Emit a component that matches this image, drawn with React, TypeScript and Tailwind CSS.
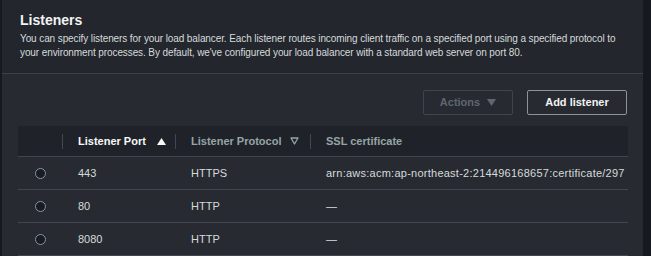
import React from 'react';

const rows = [
  { port: '443', protocol: 'HTTPS', cert: 'arn:aws:acm:ap-northeast-2:214496168657:certificate/297' },
  { port: '80', protocol: 'HTTP', cert: '—' },
  { port: '8080', protocol: 'HTTP', cert: '—' },
];

const Sep = () => <span className="w-px h-[15px] bg-[#414750] shrink-0" />;

const App = () => {
  return (
    <div className="w-[651px] h-[256px] bg-[#16191f] flex overflow-hidden font-['Liberation_Sans',Arial,sans-serif]">
      <div className="ml-[2px] w-[641px] flex flex-col bg-[#272a31]">
        {/* header */}
        <div className="h-[74px] bg-[#23262d] border-b border-[#3d424a] px-[18px] pt-[11px]">
          <h2 className="text-[14px] leading-[18px] font-bold text-[#f2f3f3]">Listeners</h2>
          <p className="mt-[3px] text-[10px] leading-[14px] tracking-[-0.1px] text-[#d5dbdb] whitespace-nowrap">
            You can specify listeners for your load balancer. Each listener routes incoming client traffic on a specified port using a specified protocol to
            <br />
            your environment processes. By default, we've configured your load balancer with a standard web server on port 80.
          </p>
        </div>

        {/* body */}
        <div className="pl-[16px] pr-[15px] pt-[16px]">
          <div className="flex justify-end gap-[14px] pr-[1px]">
            <button className="w-[90px] h-[25px] border border-[#3f444c] rounded-[2px] flex items-center justify-center gap-[7px] text-[11px] font-bold text-[#5f6670]">
              Actions
              <svg width="9" height="7" viewBox="0 0 9 7"><path d="M0 0h9L4.5 7z" fill="#5f6670" /></svg>
            </button>
            <button className="w-[100px] h-[25px] border border-[#8c9496] rounded-[2px] text-[11px] font-bold text-[#f2f3f3]">
              Add listener
            </button>
          </div>

          <div className="mt-[11px] w-[610px] overflow-hidden">
            <div className="grid grid-cols-[44px_113px_135px_1fr] h-[31px] bg-[#1f2329] border-b border-[#414750] text-[11px] font-bold">
              <div />
              <div className="flex items-center">
                <Sep />
                <span className="ml-[15px] text-[#f7f8f8]">Listener Port</span>
                <svg className="ml-[11px]" width="9" height="7" viewBox="0 0 9 7"><path d="M4.5 0L9 7H0z" fill="#f7f8f8" /></svg>
              </div>
              <div className="flex items-center">
                <Sep />
                <span className="ml-[15px] text-[#95a5a6]">Listener Protocol</span>
                <svg className="ml-[9px]" width="9" height="8" viewBox="0 0 9 8"><path d="M1 1h7L4.5 7z" fill="none" stroke="#95a5a6" strokeWidth="1.3" strokeLinejoin="round" /></svg>
              </div>
              <div className="flex items-center">
                <Sep />
                <span className="ml-[15px] text-[#95a5a6]">SSL certificate</span>
              </div>
            </div>

            {rows.map((r) => (
              <div key={r.port} className="grid grid-cols-[44px_113px_135px_1fr] h-[33px] border-b border-[#414750] text-[11px] text-[#d5dbdb] items-center">
                <div className="flex justify-center pl-[1px]">
                  <span className="w-[11px] h-[11px] rounded-full border-[1.5px] border-[#8c9496] bg-[#161d26]" />
                </div>
                <div className="pl-[16px]">{r.port}</div>
                <div className="pl-[16px]">{r.protocol}</div>
                <div className="pl-[16px] whitespace-nowrap tracking-[0.25px]">{r.cert}</div>
              </div>
            ))}
          </div>
        </div>
      </div>
    </div>
  );
};

export default App;
